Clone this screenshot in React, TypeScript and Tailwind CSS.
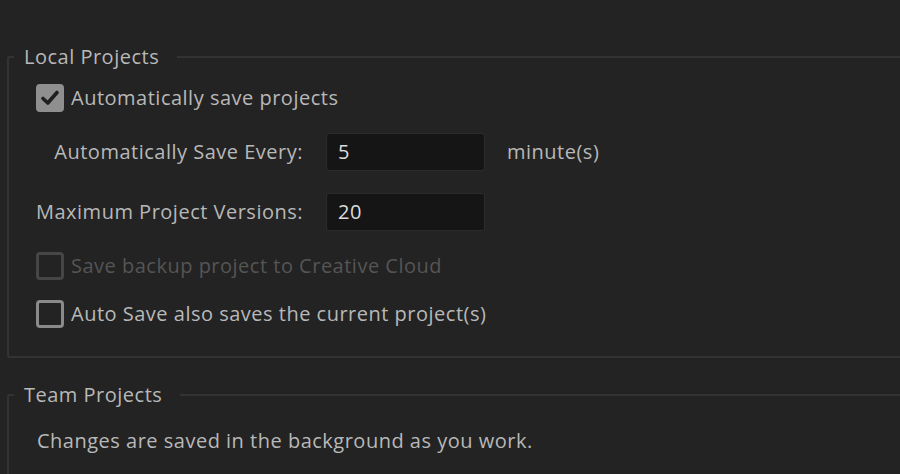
import React from 'react';

const font = { fontFamily: '"Open Sans", "Liberation Sans", sans-serif' };

const Check = ({ checked = false, disabled = false, label }: { checked?: boolean; disabled?: boolean; label: string }) => (
  <label className={`flex items-center gap-[7px] ${disabled ? 'text-[#555555]' : 'text-[#b8b8b8]'}`}>
    {checked ? (
      <span className="w-[28px] h-[28px] rounded-[4px] bg-[#8f8f8f] flex items-center justify-center shrink-0">
        <svg width="22" height="22" viewBox="0 0 22 22" fill="none">
          <path d="M4 11.5 L8.8 16 L18 5.5" stroke="#1f1f1f" strokeWidth="3.6" strokeLinecap="round" strokeLinejoin="round" />
        </svg>
      </span>
    ) : (
      <span className={`w-[28px] h-[28px] rounded-[4px] border-[3px] shrink-0 ${disabled ? 'border-[#464646]' : 'border-[#8a8a8a]'}`} />
    )}
    <span>{label}</span>
  </label>
);

const Field = ({ label, value, unit }: { label: string; value: string; unit?: string }) => (
  <div className="flex items-center">
    <span className="w-[267px] text-right text-[#b8b8b8] whitespace-nowrap">{label}</span>
    <div className="ml-[23px] w-[159px] h-[38px] bg-[#151515] border border-[#2c2c2c] rounded-[3px] flex items-center pl-[11px] text-[#dcdcdc]">
      {value}
    </div>
    {unit && <span className="ml-[22px] text-[#b8b8b8]">{unit}</span>}
  </div>
);

export default function App() {
  return (
    <div className="w-[900px] h-[474px] overflow-hidden bg-[#232323] text-[20px] tracking-[0.5px]" style={font}>
      <div className="w-[930px] pl-[7px] pt-[43px]">
        <fieldset className="border-2 border-[#333333] rounded-[2px] pl-[27px] pb-[15px]">
          <legend className="ml-[-22px] pl-[10px] pr-[18px] leading-[28px] text-[#b8b8b8]">Local Projects</legend>
          <div className="h-[54px] flex items-center"><Check checked label="Automatically save projects" /></div>
          <div className="h-[54px] flex items-center"><Field label="Automatically Save Every:" value="5" unit="minute(s)" /></div>
          <div className="h-[66px] flex items-center"><Field label="Maximum Project Versions:" value="20" /></div>
          <div className="h-[42px] flex items-center"><Check disabled label="Save backup project to Creative Cloud" /></div>
          <div className="h-[54px] flex items-center"><Check label="Auto Save also saves the current project(s)" /></div>
        </fieldset>
        <fieldset className="mt-[23px] border-2 border-[#333333] rounded-[2px] pl-[28px] h-[120px]">
          <legend className="ml-[-23px] pl-[10px] pr-[18px] leading-[28px] text-[#b8b8b8]">Team Projects</legend>
          <div className="h-[64px] flex items-center text-[#b8b8b8]">Changes are saved in the background as you work.</div>
        </fieldset>
      </div>
    </div>
  );
}
